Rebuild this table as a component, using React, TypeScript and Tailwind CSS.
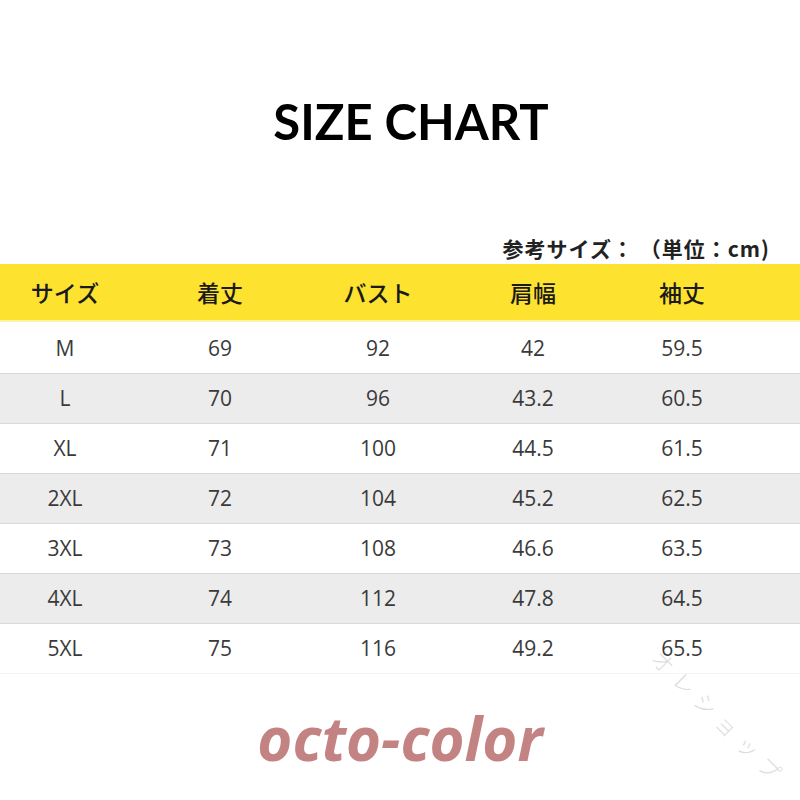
import React from 'react';

const rows = [
  { size: 'M', length: '69', bust: '92', shoulder: '42', sleeve: '59.5' },
  { size: 'L', length: '70', bust: '96', shoulder: '43.2', sleeve: '60.5' },
  { size: 'XL', length: '71', bust: '100', shoulder: '44.5', sleeve: '61.5' },
  { size: '2XL', length: '72', bust: '104', shoulder: '45.2', sleeve: '62.5' },
  { size: '3XL', length: '73', bust: '108', shoulder: '46.6', sleeve: '63.5' },
  { size: '4XL', length: '74', bust: '112', shoulder: '47.8', sleeve: '64.5' },
  { size: '5XL', length: '75', bust: '116', shoulder: '49.2', sleeve: '65.5' },
];

const headers = ['サイズ', '着丈', 'バスト', '肩幅', '袖丈'];

const cols = 'grid grid-cols-[130px_180px_136px_174px_124px]';

const App = () => {
  return (
    <div className="relative w-[800px] h-[800px] bg-white overflow-hidden">
      <h1 className="pt-[97px] pl-[22px] text-center font-['Lato',sans-serif] font-bold text-[49px] leading-none text-black">
        SIZE CHART
      </h1>

      <div className="mt-[90px] pr-[30px] text-right font-['Noto_Sans_CJK_JP',sans-serif] font-bold text-[21px] leading-[25px] tracking-[1px] text-[#222]">
        参考サイズ： （単位：cm)
      </div>

      <div className={`${cols} mt-[3px] h-[58px] items-center bg-[#fde330] border-b-2 border-[#fdf3a8]`}>
        {headers.map((h) => (
          <div
            key={h}
            className="text-center font-['Noto_Sans_CJK_JP',sans-serif] font-medium text-[23px] text-[#1a1a1a]"
          >
            {h}
          </div>
        ))}
      </div>

      <div className="mt-[2px] font-['Open_Sans',sans-serif] text-[21px] text-[#3a3a3a]">
        {rows.map((r, i) => (
          <div
            key={r.size}
            className={`${cols} h-[50px] items-center border-b ${
              i % 2 === 1 ? 'bg-[#ececec]' : 'bg-white'
            } ${i === rows.length - 1 ? 'border-[#f4f4f4]' : 'border-[#d9d9d9]'}`}
          >
            <div className="text-center">{r.size}</div>
            <div className="text-center">{r.length}</div>
            <div className="text-center">{r.bust}</div>
            <div className="text-center">{r.shoulder}</div>
            <div className="text-center">{r.sleeve}</div>
          </div>
        ))}
      </div>

      <div className="mt-[34px] text-center font-['Open_Sans',sans-serif] font-bold italic text-[60px] leading-none text-[#c48383]">
        octo-color
      </div>

      {/* watermark */}
      <span className="absolute left-[630px] top-[706px] w-[180px] text-center rotate-45 font-['Noto_Sans_CJK_JP',sans-serif] font-light text-[22px] leading-[22px] tracking-[8px] text-[#dcdcdc]">
        オレショップ
      </span>
    </div>
  );
};

export default App;
